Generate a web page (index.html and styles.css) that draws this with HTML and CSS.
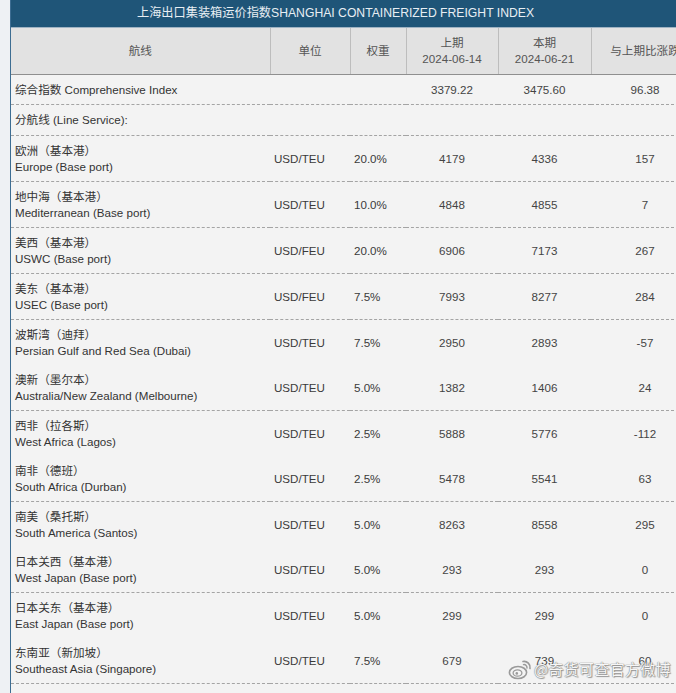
FILE: index.html
```html
<!DOCTYPE html>
<html lang="zh">
<head>
<meta charset="utf-8">
<title>SCFI</title>
<link rel="stylesheet" href="styles.css">
</head>
<body>
<div class="page">
  <div class="sheet">
    <div class="title">上海出口集装箱运价指数SHANGHAI CONTAINERIZED FREIGHT INDEX</div>
    <table class="scfi">
      <colgroup>
        <col class="c-route"><col class="c-unit"><col class="c-weight"><col class="c-prev"><col class="c-cur"><col class="c-chg">
      </colgroup>
      <thead>
        <tr>
          <th>航线</th>
          <th>单位</th>
          <th>权重</th>
          <th>上期<br>2024-06-14</th>
          <th>本期<br>2024-06-21</th>
          <th>与上期比涨跌</th>
        </tr>
      </thead>
      <tbody>
        <tr class="short sep">
          <td class="route">综合指数 Comprehensive Index</td>
          <td></td><td></td>
          <td class="num">3379.22</td><td class="num">3475.60</td><td class="num">96.38</td>
        </tr>
        <tr class="short2 sep">
          <td class="route" colspan="6">分航线 (Line Service):</td>
        </tr>
        <tr class="sep">
          <td class="route">欧洲（基本港）<br>Europe (Base port)</td>
          <td class="unit">USD/TEU</td><td class="unit">20.0%</td>
          <td class="num">4179</td><td class="num">4336</td><td class="num">157</td>
        </tr>
        <tr class="sep">
          <td class="route">地中海（基本港）<br>Mediterranean (Base port)</td>
          <td class="unit">USD/TEU</td><td class="unit">10.0%</td>
          <td class="num">4848</td><td class="num">4855</td><td class="num">7</td>
        </tr>
        <tr class="sep">
          <td class="route">美西（基本港）<br>USWC (Base port)</td>
          <td class="unit">USD/FEU</td><td class="unit">20.0%</td>
          <td class="num">6906</td><td class="num">7173</td><td class="num">267</td>
        </tr>
        <tr class="sep">
          <td class="route">美东（基本港）<br>USEC (Base port)</td>
          <td class="unit">USD/FEU</td><td class="unit">7.5%</td>
          <td class="num">7993</td><td class="num">8277</td><td class="num">284</td>
        </tr>
        <tr>
          <td class="route">波斯湾（迪拜）<br>Persian Gulf and Red Sea (Dubai)</td>
          <td class="unit">USD/TEU</td><td class="unit">7.5%</td>
          <td class="num">2950</td><td class="num">2893</td><td class="num">-57</td>
        </tr>
        <tr class="sep">
          <td class="route">澳新（墨尔本）<br>Australia/New Zealand (Melbourne)</td>
          <td class="unit">USD/TEU</td><td class="unit">5.0%</td>
          <td class="num">1382</td><td class="num">1406</td><td class="num">24</td>
        </tr>
        <tr>
          <td class="route">西非（拉各斯）<br>West Africa (Lagos)</td>
          <td class="unit">USD/TEU</td><td class="unit">2.5%</td>
          <td class="num">5888</td><td class="num">5776</td><td class="num">-112</td>
        </tr>
        <tr class="sep">
          <td class="route">南非（德班）<br>South Africa (Durban)</td>
          <td class="unit">USD/TEU</td><td class="unit">2.5%</td>
          <td class="num">5478</td><td class="num">5541</td><td class="num">63</td>
        </tr>
        <tr>
          <td class="route">南美（桑托斯）<br>South America (Santos)</td>
          <td class="unit">USD/TEU</td><td class="unit">5.0%</td>
          <td class="num">8263</td><td class="num">8558</td><td class="num">295</td>
        </tr>
        <tr class="sep">
          <td class="route">日本关西（基本港）<br>West Japan (Base port)</td>
          <td class="unit">USD/TEU</td><td class="unit">5.0%</td>
          <td class="num">293</td><td class="num">293</td><td class="num">0</td>
        </tr>
        <tr>
          <td class="route">日本关东（基本港）<br>East Japan (Base port)</td>
          <td class="unit">USD/TEU</td><td class="unit">5.0%</td>
          <td class="num">299</td><td class="num">299</td><td class="num">0</td>
        </tr>
        <tr class="sep">
          <td class="route">东南亚（新加坡）<br>Southeast Asia (Singapore)</td>
          <td class="unit">USD/TEU</td><td class="unit">7.5%</td>
          <td class="num">679</td><td class="num">739</td><td class="num">60</td>
        </tr>
        <tr>
          <td class="route">韩国（釜山）<br>Korea (Pusan)</td>
          <td class="unit">USD/TEU</td><td class="unit">2.5%</td>
          <td class="num">179</td><td class="num">179</td><td class="num">0</td>
        </tr>
      </tbody>
    </table>
  </div>
  <div class="watermark">
    <svg class="wb-logo" width="24" height="22" viewBox="0 0 24 22" aria-hidden="true">
      <ellipse cx="10" cy="14.5" rx="8.6" ry="6" fill="#f4f4f4" stroke="#9a9a9a" stroke-width="1.6"/>
      <ellipse cx="9.5" cy="15" rx="4.4" ry="3.2" fill="none" stroke="#9a9a9a" stroke-width="1.3"/>
      <circle cx="8.8" cy="15.4" r="1.3" fill="#9a9a9a"/>
      <path d="M15 3.5 A6 6 0 0 1 22 10.5" fill="none" stroke="#9a9a9a" stroke-width="1.6" stroke-linecap="round"/>
      <path d="M15.5 6.6 A3 3 0 0 1 19 10" fill="none" stroke="#9a9a9a" stroke-width="1.4" stroke-linecap="round"/>
    </svg>
    <span class="wb-text">@奇货可查官方微博</span>
  </div>
</div>
</body>
</html>
```
FILE: styles.css
```css
html, body {
  margin: 0;
  padding: 0;
}
body {
  background: #eef1f4;
  font-family: "Liberation Sans", Arial, "Noto Sans CJK SC", sans-serif;
  overflow: hidden;
}
.page {
  position: relative;
  width: 676px;
  height: 693px;
  overflow: hidden;
  padding-left: 10px;
  box-sizing: border-box;
}
.sheet {
  width: 700px;
  border-left: 1px solid #3d6d92;
  background: #f3f3f3;
  min-height: 693px;
}
.title {
  height: 27px;
  line-height: 27px;
  background: #1f5578;
  color: #e8eef3;
  font-size: 12.2px;
  text-align: center;
  padding-right: 51px;
  border-bottom: 1px solid #9fb3c3;
  white-space: nowrap;
}
.scfi {
  width: 688px;
  border-collapse: collapse;
  table-layout: fixed;
  font-size: 11.6px;
  color: #3a3a3a;
}
.c-route { width: 259px; }
.c-unit { width: 80px; }
.c-weight { width: 56px; }
.c-prev { width: 92px; }
.c-cur { width: 93px; }
.c-chg { width: 108px; }
.scfi th {
  background: #e2e2e2;
  color: #555;
  font-weight: normal;
  font-size: 11.6px;
  height: 46px;
  line-height: 16px;
  padding: 0;
  white-space: nowrap;
  border-right: 1px solid #bdbdbd;
  border-bottom: 1px solid #8f8f8f;
}
.scfi td {
  padding: 6px 4px;
  height: 33px;
  line-height: 16px;
  vertical-align: middle;
  white-space: nowrap;
}
.scfi tr.short td {
  height: 17px;
}
.scfi tr.short2 td {
  height: 18px;
}
.scfi tr.sep td {
  border-bottom: 1px dashed #a4a4a4;
}
.scfi td.route {
  padding-left: 4px;
  color: #333;
}
.scfi td.unit {
  text-align: left;
  color: #3a3a3a;
}
.scfi td.num {
  text-align: center;
  color: #444;
}
.watermark {
  position: absolute;
  left: 508px;
  top: 658px;
  display: flex;
  align-items: center;
  gap: 2px;
  white-space: nowrap;
}
.wb-text {
  font-family: "Noto Sans CJK SC", sans-serif;
  font-size: 15px;
  line-height: 20px;
  color: #f6f6f6;
  letter-spacing: 0.3px;
  text-shadow: 0 0 1px #7f7f7f, 0 0 1px #7f7f7f, 1px 1px 1px #9a9a9a;
}
```
